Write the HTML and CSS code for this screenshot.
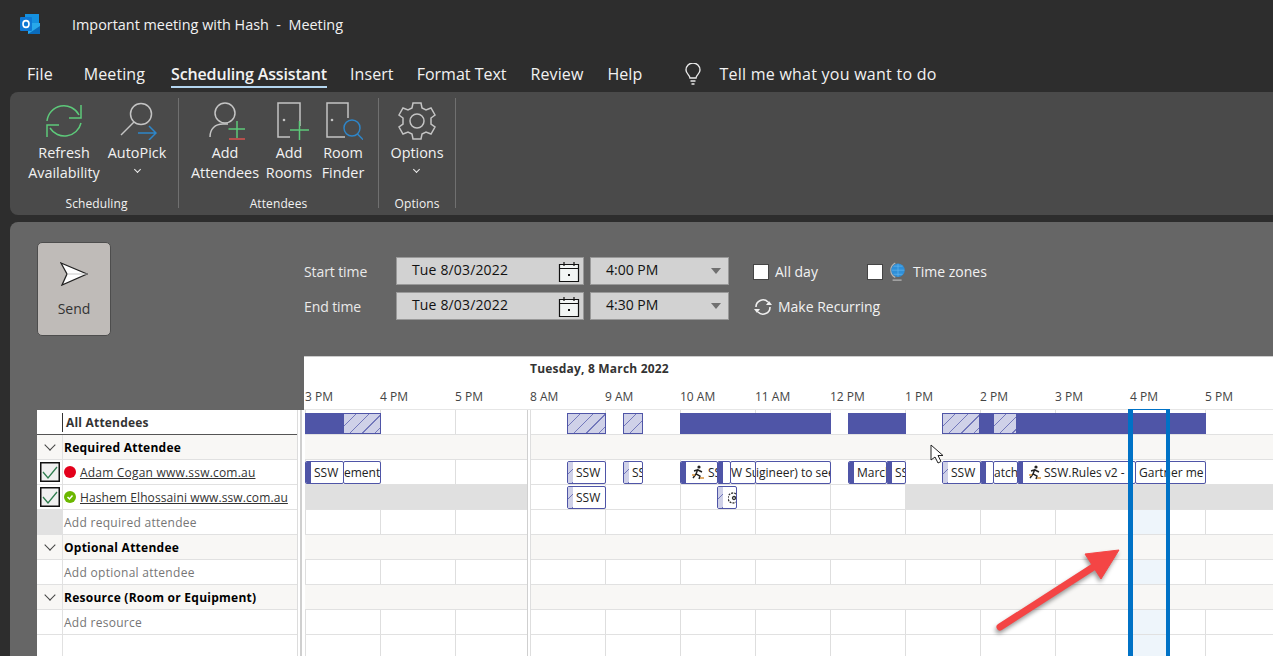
FILE: index.html
```html
<!DOCTYPE html>
<html lang="en">
<head>
    <meta charset="UTF-8">
    <title>Important meeting with Hash - Meeting</title>
    <link rel="stylesheet" href="styles.css">
</head>
<body>
    <header class="titlebar">
        <svg class="logo" width="20" height="20" viewBox="0 0 20 20">
            <rect x="5" y="0" width="14" height="16" fill="#1490df"/>
            <path d="M8 9h12v11H8z" fill="#28a8ea"/>
            <path d="M8 20l12-8v8z" fill="#0a6cbd"/>
            <rect x="0" y="3" width="12" height="14" rx="1" fill="#0f78d4"/>
            <ellipse cx="6" cy="10" rx="3" ry="3.4" fill="none" stroke="#fff" stroke-width="1.6"/>
        </svg>
        <span class="doc-title">Important meeting with Hash&nbsp; -&nbsp; Meeting</span>
    </header>

    <nav class="tabs">
        <a class="tab tab-file">File</a>
        <a class="tab tab-meeting">Meeting</a>
        <a class="tab tab-active">Scheduling Assistant</a>
        <a class="tab">Insert</a>
        <a class="tab tab-format">Format Text</a>
        <a class="tab">Review</a>
        <a class="tab">Help</a>
        <svg class="bulb" width="18" height="22" viewBox="0 0 18 22" fill="none" stroke="#e8e8e8" stroke-width="1.4">
            <path d="M6 15c0-3-4-4-4-8a7 7 0 0 1 14 0c0 4-4 5-4 8z"/>
            <path d="M6.5 18h5M7.5 21h3"/>
        </svg>
        <span class="tell">Tell me what you want to do</span>
    </nav>

    <section class="ribbon">
        <div class="group group-scheduling">
            <div class="btns">
                <div class="rbtn w-refresh">
                    <svg width="40" height="38" viewBox="0 0 40 38" fill="none" stroke="#5dc97a" stroke-width="1.5">
                        <path d="M3 19A17 17 0 0 1 35 13"/>
                        <path d="M37 3v13H25"/>
                        <path d="M37 21A17 17 0 0 1 6 26"/>
                        <path d="M3 35V23h12"/>
                    </svg>
                    <span>Refresh<br>Availability</span>
                </div>
                <div class="rbtn w-autopick">
                    <svg width="40" height="38" viewBox="0 0 40 38" fill="none" stroke-width="1.5">
                        <circle cx="24" cy="12" r="10.5" stroke="#c4c4c4"/>
                        <path d="M17 20L4 33" stroke="#c4c4c4"/>
                        <path d="M21 31h18M32 24l7 7-7 7" stroke="#2e86c9"/>
                    </svg>
                    <span>AutoPick<br><i class="caret"></i></span>
                </div>
            </div>
            <div class="group-label label-scheduling">Scheduling</div>
        </div>
        <div class="group group-attendees">
            <div class="btns">
                <div class="rbtn w-addatt">
                    <svg width="40" height="38" viewBox="0 0 40 38" fill="none" stroke-width="1.5">
                        <circle cx="20" cy="11" r="10" stroke="#c4c4c4"/>
                        <path d="M5 35c0-8 5-13 13-13h5" stroke="#c4c4c4"/>
                        <path d="M23.500 27h17M32 19v17" stroke="#5dc97a"/>
                        <path d="M24 37h16" stroke="#d9534f"/>
                    </svg>
                    <span>Add<br>Attendees</span>
                </div>
                <div class="rbtn w-addroom">
                    <svg width="40" height="38" viewBox="0 0 40 38" fill="none" stroke-width="1.5">
                        <path d="M21 35H9V1h22v23" stroke="#c4c4c4"/>
                        <circle cx="15" cy="18" r="1.300" fill="#c4c4c4"/>
                        <path d="M21 28h19M30.500 19v19" stroke="#5dc97a"/>
                    </svg>
                    <span>Add<br>Rooms</span>
                </div>
                <div class="rbtn w-finder">
                    <svg width="40" height="38" viewBox="0 0 40 38" fill="none" stroke-width="1.5">
                        <path d="M22 35H4V1h21v15" stroke="#c4c4c4"/>
                        <circle cx="9" cy="18" r="1.300" fill="#c4c4c4"/>
                        <circle cx="29" cy="26" r="8" stroke="#2e86c9"/>
                        <path d="M34.500 32l6 6" stroke="#2e86c9"/>
                    </svg>
                    <span>Room<br>Finder</span>
                </div>
            </div>
            <div class="group-label">Attendees</div>
        </div>
        <div class="group group-options">
            <div class="btns">
                <div class="rbtn w-options">
                    <svg width="38" height="38" viewBox="0 0 38 38" fill="none" stroke="#c4c4c4" stroke-width="1.500">
                        <path d="M15 1h8l1 5 4 2 5-2 4 7-4 3v6l4 3-4 7-5-2-4 2-1 5h-8l-1-5-4-2-5 2-4-7 4-3v-6l-4-3 4-7 5 2 4-2z"/>
                        <circle cx="19" cy="19" r="7"/>
                    </svg>
                    <span>Options<br><i class="caret"></i></span>
                </div>
            </div>
            <div class="group-label">Options</div>
        </div>
    </section>

    <main class="panel">
        <div class="top">
            <button class="send">
                <svg width="28" height="24" viewBox="0 0 28 24">
                    <path d="M1 1l26 11L2 23l5-11z" fill="#fff" stroke="#222" stroke-width="1.300"/>
                    <path d="M7 12h20" stroke="#bbb" stroke-width="0.800"/>
                </svg>
                <span>Send</span>
            </button>
            <div class="times">
                <div class="time-row">
                    <label class="time-label">Start time</label>
                    <div class="field field-date">
                        <span>Tue 8/03/2022</span>
                        <svg class="cal" width="22" height="21" viewBox="0 0 22 21" fill="#f2f5f4" stroke="#111" stroke-width="1.200">
                            <path d="M1.500 3.500h19v17h-19z"/>
                            <path d="M1.500 7.500h19M6 1v4M16 1v4" fill="none"/>
                            <rect x="10" y="13" width="2" height="2" fill="#111" stroke="none"/>
                        </svg>
                    </div>
                    <div class="field field-time"><span>4:00 PM</span><i class="drop"></i></div>
                    <div class="check-wrap check-allday"><i class="box"></i><span>All day</span></div>
                    <div class="check-wrap"><i class="box"></i>
                        <svg class="globe" width="18" height="22" viewBox="0 0 20 22">
                            <path d="M7 1a9 9 0 0 0 0 16M4 20h10" fill="none" stroke="#b5b5b5" stroke-width="1.500"/>
                            <circle cx="10" cy="9" r="7.500" fill="#2f8fd8"/>
                            <path d="M3 9h14M10 2v14M5 4.500h10M5 13.500h10" stroke="#63b4ec" stroke-width="0.800"/>
                        </svg>
                        <span>Time zones</span>
                    </div>
                </div>
                <div class="time-row">
                    <label class="time-label">End time</label>
                    <div class="field field-date">
                        <span>Tue 8/03/2022</span>
                        <svg class="cal" width="22" height="21" viewBox="0 0 22 21" fill="#f2f5f4" stroke="#111" stroke-width="1.200">
                            <path d="M1.500 3.500h19v17h-19z"/>
                            <path d="M1.500 7.500h19M6 1v4M16 1v4" fill="none"/>
                            <rect x="10" y="13" width="2" height="2" fill="#111" stroke="none"/>
                        </svg>
                    </div>
                    <div class="field field-time"><span>4:30 PM</span><i class="drop"></i></div>
                    <div class="recurring">
                        <svg width="20" height="18" viewBox="0 0 20 18" fill="none" stroke="#f0f0f0" stroke-width="1.600">
                            <path d="M3 9a7 7 0 0 1 12-5"/>
                            <path d="M17 9a7 7 0 0 1-12 5"/>
                            <path d="M13 7h6l-3-4z" fill="#f0f0f0" stroke="none"/>
                            <path d="M1 11h6l-3 4z" fill="#f0f0f0" stroke="none"/>
                        </svg>
                        <span>Make Recurring</span>
                    </div>
                </div>
            </div>
        </div>

        <div class="schedule">
            <div class="people">
                <div class="people-table">
                    <div class="p-row p-head"><div class="p-icon"><i class="head-tick"></i></div><div class="p-name">All Attendees</div></div>
                    <div class="p-row p-group"><div class="p-icon"><i class="chev"></i></div><div class="p-name">Required Attendee</div></div>
                    <div class="p-row">
                        <div class="p-icon"><i class="tick"><svg width="18" height="17" viewBox="0 0 18 17" fill="none" stroke="#2f7d4f" stroke-width="1.300"><path d="M2 8l5 6L16 3"/></svg></i></div>
                        <div class="p-name p-person"><i class="dot dot-busy"></i><a>Adam Cogan www.ssw.com.au</a></div>
                    </div>
                    <div class="p-row">
                        <div class="p-icon"><i class="tick"><svg width="18" height="17" viewBox="0 0 18 17" fill="none" stroke="#2f7d4f" stroke-width="1.300"><path d="M2 8l5 6L16 3"/></svg></i></div>
                        <div class="p-name p-person">
                            <i class="dot dot-free"><svg width="12" height="12" viewBox="0 0 12 12" fill="none" stroke="#fff" stroke-width="1.500"><path d="M3.500 6l2 2 3-3.500"/></svg></i>
                            <a class="a-hashem">Hashem Elhossaini www.ssw.com.au</a>
                        </div>
                    </div>
                    <div class="p-row"><div class="p-icon p-icon-grey"></div><div class="p-name p-add">Add required attendee</div></div>
                    <div class="p-row p-group"><div class="p-icon"><i class="chev"></i></div><div class="p-name">Optional Attendee</div></div>
                    <div class="p-row"><div class="p-icon"></div><div class="p-name p-add">Add optional attendee</div></div>
                    <div class="p-row p-group"><div class="p-icon"><i class="chev"></i></div><div class="p-name">Resource (Room or Equipment)</div></div>
                    <div class="p-row"><div class="p-icon"></div><div class="p-name p-add">Add resource</div></div>
                    <div class="p-row p-last"><div class="p-icon"></div><div class="p-name"></div></div>
                </div>
            </div>

            <div class="timeline">
                <div class="tl-head">
                    <div class="tl-date">Tuesday, 8 March 2022</div>
                    <div class="tl-hours">
                        <span>3 PM</span><span>4 PM</span><span>5 PM</span><span>8 AM</span><span>9 AM</span><span>10 AM</span><span>11 AM</span><span>12 PM</span><span>1 PM</span><span>2 PM</span><span>3 PM</span><span>4 PM</span><span>5 PM</span>
                    </div>
                </div>
                <div class="tl-rows">
                    <div class="tl-row">
                        <i class="sum solid" style="left:0;width:38px"></i>
                        <i class="sum hatch" style="left:38px;width:38px"></i>
                        <i class="sum hatch" style="left:262px;width:39px"></i>
                        <i class="sum hatch" style="left:318px;width:20px"></i>
                        <i class="sum solid" style="left:375px;width:151px"></i>
                        <i class="sum solid" style="left:543px;width:58px"></i>
                        <i class="sum hatch" style="left:637px;width:38px"></i>
                        <i class="sum solid" style="left:675px;width:13px"></i>
                        <i class="sum hatch" style="left:688px;width:24px"></i>
                        <i class="sum solid" style="left:712px;width:189px"></i>
                    </div>
                    <div class="tl-row tl-group"></div>
                    <div class="tl-row">
                        <div class="evt" style="left:0;width:39px"><i class="bar solid"></i><span>SSW</span></div>
                        <div class="evt evt-flush" style="left:38px;width:38px"><span>ement</span></div>
                        <div class="evt" style="left:262px;width:39px"><i class="bar hatch"></i><span>SSW</span></div>
                        <div class="evt" style="left:318px;width:20px"><i class="bar hatch"></i><span>SSW</span></div>
                        <div class="evt" style="left:375px;width:38px"><i class="bar solid"></i>
                            <svg class="runner" width="14" height="15" viewBox="0 0 14 15" fill="none" stroke="#222" stroke-width="1.400"><circle cx="8" cy="2" r="1.600" fill="#222" stroke="none"/><path d="M7 4L5 9l4 2-1 3M5 9l-3 4M7 5l4 2M6 5L3 6"/><path d="M1 10h3M9 13h4" stroke="#d6913c"/></svg>
                            <span>SSW</span></div>
                        <div class="evt" style="left:412px;width:14px"><i class="bar solid"></i><span></span></div>
                        <div class="evt evt-flush" style="left:425px;width:26px"><span>W Su</span></div>
                        <div class="evt evt-flush" style="left:450px;width:76px"><span>igineer) to see</span></div>
                        <div class="evt" style="left:543px;width:39px"><i class="bar solid"></i><span>March</span></div>
                        <div class="evt" style="left:581px;width:20px"><i class="bar solid"></i><span>SSW</span></div>
                        <div class="evt" style="left:637px;width:39px"><i class="bar hatch"></i><span>SSW</span></div>
                        <div class="evt" style="left:675px;width:14px"><i class="bar solid"></i><span></span></div>
                        <div class="evt evt-flush" style="left:688px;width:25px"><span>atch-</span></div>
                        <div class="evt" style="left:712px;width:119px"><i class="bar solid"></i>
                            <svg class="runner" width="14" height="15" viewBox="0 0 14 15" fill="none" stroke="#222" stroke-width="1.400"><circle cx="8" cy="2" r="1.600" fill="#222" stroke="none"/><path d="M7 4L5 9l4 2-1 3M5 9l-3 4M7 5l4 2M6 5L3 6"/><path d="M1 10h3M9 13h4" stroke="#d6913c"/></svg>
                            <span class="tight">SSW.Rules v2 -</span></div>
                        <div class="evt" style="left:830px;width:71px"><span>Gartner me</span></div>
                    </div>
                    <div class="tl-row tl-off">
                        <i class="work" style="left:225px;width:375px"></i>
                        <div class="evt" style="left:262px;width:39px"><i class="bar hatch"></i><span>SSW</span></div>
                        <div class="evt" style="left:412px;width:20px"><i class="bar hatch"></i>
                            <svg class="runner" width="9" height="14" viewBox="0 0 9 14" fill="none" stroke="#333" stroke-width="1.300"><path d="M8 3a5 5 0 1 0 0 8" stroke-dasharray="2 1"/><circle cx="6" cy="7" r="1.500"/></svg>
                        </div>
                    </div>
                    <div class="tl-row"><i class="picked"></i></div>
                    <div class="tl-row tl-group"></div>
                    <div class="tl-row"><i class="picked"></i></div>
                    <div class="tl-row tl-group"></div>
                    <div class="tl-row"><i class="picked"></i></div>
                    <div class="tl-row tl-last"><i class="picked"></i></div>

                    <i class="day-gap"></i>
                    <i class="selection"></i>

                    <svg class="cursor" width="14" height="20" viewBox="0 0 14 20">
                        <path d="M1 1v15l4-3 3 6 3-1.500-3-6h5z" fill="#fff" stroke="#222" stroke-width="1"/>
                    </svg>
                    <svg class="arrow" width="130" height="90" viewBox="0 0 130 90">
                        <path d="M6 82L104 19" stroke="#f44545" stroke-width="7" stroke-linecap="round"/>
                        <path d="M91 9l34-4-18 29z" fill="#f44545" stroke="#f44545" stroke-linejoin="round"/>
                    </svg>
                </div>
            </div>
        </div>
    </main>
</body>
</html>
```

FILE: styles.css
```css
* {
    box-sizing: border-box;
}
html, body {
    height: 100%;
}
body {
    margin: 0;
    background-color: #2d2d2d;
    color: #f2f2f2;
    font-family: "Open Sans", "Noto Sans", sans-serif;
    font-size: 14px;
    overflow: hidden;
}
i {
    font-style: normal;
}

/* title bar and tabs */
.titlebar {
    height: 50px;
    padding: 0 0 2px 20px;
    display: flex;
    align-items: center;
}
.doc-title {
    margin-left: 32px;
    font-size: 14.4px;
}
.tabs {
    height: 42px;
    padding: 10px 0 0 27px;
    display: flex;
    align-items: flex-start;
    gap: 24px;
    font-size: 16px;
    letter-spacing: 0.1px;
}
.tab {
    line-height: 28px;
    height: 28px;
}
.tab-file {
    margin-right: 7px;
}
.tab-meeting {
    margin-right: 2px;
}
.tab-active {
    font-weight: 600;
    border-bottom: 2px solid #b4d6f0;
    letter-spacing: -0.15px;
    margin-right: -1px;
}
.tab-format {
    margin-left: -1px;
    letter-spacing: 0;
}
.bulb {
    margin: 3px 0 0 18px;
}
.tell {
    margin-left: -7px;
    line-height: 28px;
    letter-spacing: 0.25px;
}

/* ribbon */
.ribbon {
    height: 123px;
    margin-left: 10px;
    padding-top: 6px;
    background-color: #4a4a4a;
    border-radius: 8px 0 0 8px;
    display: flex;
    align-items: flex-start;
}
.group {
    height: 110px;
    border-right: 1px solid #707070;
}
.group-scheduling {
    width: 169px;
}
.group-scheduling .btns {
    padding-left: 15px;
}
.group-attendees {
    width: 200px;
}
.group-attendees .btns {
    padding-left: 11px;
}
.group-options {
    width: 77px;
}
.btns {
    display: flex;
    height: 97px;
}
.rbtn {
    padding-top: 4px;
    display: flex;
    flex-direction: column;
    align-items: center;
    text-align: center;
    font-size: 14.4px;
    line-height: 20px;
    white-space: nowrap;
}
.rbtn svg {
    margin-bottom: 3px;
}
.w-refresh {
    width: 78px;
}
.w-autopick {
    width: 68px;
}
.w-addatt {
    width: 70px;
}
.w-addroom {
    width: 58px;
}
.w-finder {
    width: 50px;
}
.w-options {
    width: 76px;
}
.caret {
    display: inline-block;
    width: 5px;
    height: 5px;
    vertical-align: 6px;
    border-right: 1px solid #eee;
    border-bottom: 1px solid #eee;
    transform: rotate(45deg);
}
.group-label {
    height: 13px;
    text-align: center;
    font-size: 12px;
    line-height: 18px;
    letter-spacing: 0.1px;
}
.label-scheduling {
    padding-left: 5px;
}

/* main panel */
.panel {
    height: 434px;
    margin: 7px 0 0 10px;
    padding: 20px 0 0 27px;
    background-color: #666;
    border-radius: 8px 0 0 0;
    overflow: hidden;
}
.top {
    height: 114px;
    display: flex;
}
.send {
    width: 74px;
    height: 94px;
    padding: 19px 0 0;
    background-color: #bfbbb8;
    border: 1px solid #4d4d4d;
    border-radius: 5px;
    color: #333;
    font: inherit;
    display: flex;
    flex-direction: column;
    align-items: center;
    gap: 13px;
}
.times {
    margin-left: 193px;
    padding-top: 15px;
    display: flex;
    flex-direction: column;
    gap: 7px;
}
.time-row {
    height: 28px;
    display: flex;
    align-items: center;
}
.time-label {
    width: 92px;
    color: #eaeaea;
    letter-spacing: -0.1px;
}
.field {
    height: 28px;
    background-color: #d2d2d2;
    border: 1px solid #999;
    color: #111;
    display: flex;
    align-items: center;
    justify-content: space-between;
    padding-bottom: 4px;
}
.field-date {
    width: 188px;
    padding-left: 15px;
    padding-right: 3px;
    margin-right: 6px;
    letter-spacing: 0.15px;
}
.cal {
    margin-top: 4px;
}
.field-time {
    width: 139px;
    padding-left: 15px;
    padding-right: 7px;
}
.drop {
    margin-top: 4px;
    border-left: 5.5px solid transparent;
    border-right: 5.5px solid transparent;
    border-top: 6px solid #707070;
}
.check-wrap {
    display: flex;
    align-items: center;
    margin-left: 24px;
    padding-top: 1px;
}
.check-allday {
    width: 90px;
}
.box {
    width: 16px;
    height: 16px;
    background-color: #fff;
    border: 1px solid #444;
    margin-right: 6px;
}
.globe {
    margin-right: 6px;
}
.recurring {
    margin-left: 24px;
    padding-top: 1px;
    display: flex;
    align-items: center;
    gap: 5px;
}

/* scheduling grid */
.schedule {
    display: flex;
    color: #333;
}
.people {
    width: 268px;
    margin-top: 54px;
    height: 246px;
    background-color: #fff;
}
.people-table {
    width: 261px;
    height: 100%;
    border-right: 1px solid #dcdcdc;
    position: relative;
}
.people-table::after {
    content: "";
    position: absolute;
    left: 263px;
    top: 0;
    bottom: 0;
    width: 2px;
    background-color: #cfcfcf;
}
.p-row {
    height: 25px;
    display: flex;
    border-bottom: 1px solid #e1e1e1;
    font-size: 12px;
    line-height: 25px;
}
.p-last {
    height: 21px;
    border-bottom: 0;
}
.p-icon {
    width: 26px;
    border-right: 1px solid #e1e1e1;
    flex: none;
    display: flex;
    align-items: center;
    justify-content: center;
}
.p-icon-grey {
    background-color: #e1e1e1;
}
.p-name {
    flex: 1;
    padding-left: 1px;
    white-space: nowrap;
}
.p-head {
    border-bottom-color: #555;
    font-weight: 700;
    letter-spacing: 0.2px;
}
.p-head .p-icon {
    border-right: 0;
    justify-content: flex-end;
}
.head-tick {
    width: 1px;
    height: 19px;
    background-color: #333;
}
.p-head .p-name {
    padding-left: 3px;
}
.p-group {
    background-color: #f8f7f5;
    color: #000;
    font-weight: 700;
    letter-spacing: 0.25px;
}
.chev {
    width: 8px;
    height: 8px;
    margin-top: -4px;
    border-right: 1.500px solid #444;
    border-bottom: 1.500px solid #444;
    transform: rotate(45deg);
}
.tick {
    width: 20px;
    height: 20px;
    background-color: #f0f0f0;
    border: 1px solid #111;
    box-shadow: inset 0 0 0 0.500px #111;
    display: flex;
    align-items: center;
    justify-content: center;
}
.p-person {
    display: flex;
    align-items: center;
    gap: 4px;
}
.p-person a {
    text-decoration: underline;
    letter-spacing: 0.2px;
}
.p-person .a-hashem {
    letter-spacing: 0.1px;
}
.dot {
    width: 12px;
    height: 12px;
    border-radius: 50%;
    display: block;
    flex: none;
}
.dot svg {
    display: block;
}
.dot-busy {
    background-color: #e3001b;
}
.dot-free {
    background-color: #6bb700;
}
.p-add {
    color: #767676;
    letter-spacing: 0.28px;
}

.timeline {
    flex: 1;
    min-width: 0;
}
.tl-head {
    height: 54px;
    margin-left: -1px;
    padding-left: 1px;
    background-color: #fff;
    border-top: 1px solid #ccc;
    border-bottom: 1px solid #e6e6e6;
    font-size: 12px;
    overflow: hidden;
}
.tl-date {
    padding: 4px 0 0 225px;
    line-height: 16px;
    font-weight: 700;
    letter-spacing: 0.2px;
}
.tl-hours {
    margin-top: 12px;
    display: grid;
    grid-template-columns: repeat(13, 75px);
    line-height: 16px;
    color: #444;
}
.tl-rows {
    position: relative;
    height: 246px;
}
.tl-row {
    position: relative;
    height: 25px;
    background-color: #fff;
    background-image: linear-gradient(90deg, #dedede 1px, transparent 1px);
    background-size: 75px 100%;
    border-bottom: 1px solid #e1e1e1;
}
.tl-last {
    height: 21px;
    border-bottom: 0;
}
.tl-group {
    background-color: #f8f7f5;
    background-image: none;
}
.tl-off {
    background-color: #e0e0e0;
    background-image: none;
}
.work {
    position: absolute;
    top: 0;
    bottom: 0;
    background-color: #fff;
    background-image: linear-gradient(90deg, #dedede 1px, transparent 1px);
    background-size: 75px 100%;
}
.solid {
    background-color: #4f55a7;
}
.hatch {
    background-color: #cfd1e8;
    background-image: repeating-linear-gradient(135deg, transparent 0 8px, #7378bb 8px 9px);
}
.sum {
    position: absolute;
    top: 3px;
    height: 21px;
    border: 1px solid #4f55a7;
}
.evt {
    position: absolute;
    top: 1px;
    height: 23px;
    background-color: #fff;
    border: 1px solid #4f55a7;
    border-radius: 2px;
    display: flex;
    align-items: center;
    overflow: hidden;
    font-size: 12px;
    color: #222;
    white-space: nowrap;
}
.evt span {
    padding-left: 3px;
}
.evt-flush span {
    padding-left: 0;
}
.evt span.tight {
    padding-left: 2px;
}
.bar {
    width: 5px;
    height: 100%;
    flex: none;
}
.runner {
    margin-left: 5px;
    flex: none;
}
.picked {
    position: absolute;
    left: 828px;
    width: 33px;
    top: 0;
    bottom: 0;
    background-color: #eef5fb;
}
.day-gap {
    position: absolute;
    left: 222px;
    top: 0;
    bottom: 0;
    width: 4px;
    background-color: #fff;
    border-left: 1px solid #cfcfcf;
    border-right: 1px solid #dedede;
}
.selection {
    position: absolute;
    left: 823px;
    top: -1px;
    bottom: 0;
    width: 42px;
    border-left: 5px solid #0072c6;
    border-right: 4px solid #0072c6;
    border-top: 1px solid #0072c6;
}
.cursor {
    position: absolute;
    left: 625px;
    top: 34px;
}
.arrow {
    position: absolute;
    left: 689px;
    top: 135px;
    filter: drop-shadow(-1px 3px 2px rgba(0, 0, 0, 0.4));
}
```
